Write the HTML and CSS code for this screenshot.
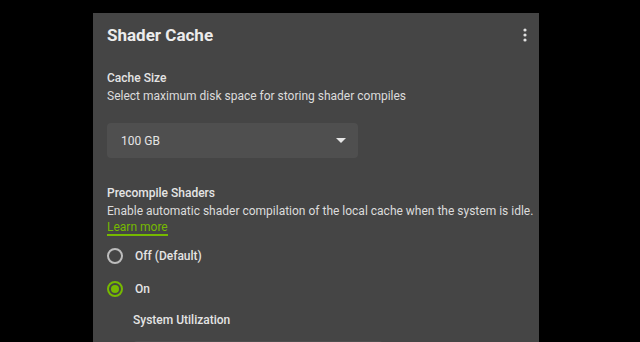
FILE: index.html
```html
<!DOCTYPE html>
<html lang="en">
<head>
    <meta charset="UTF-8">
    <title>Shader Cache</title>
    <link rel="stylesheet" href="styles.css">
</head>
<body>
    <div class="panel">
        <div class="panel-header">
            <span class="panel-title">Shader Cache</span>
            <button class="kebab" aria-label="More">
                <svg width="4" height="14" viewBox="0 0 4 14"><circle cx="2" cy="2" r="1.6" fill="#e0e0e0"/><circle cx="2" cy="7" r="1.6" fill="#e0e0e0"/><circle cx="2" cy="12" r="1.6" fill="#e0e0e0"/></svg>
            </button>
        </div>

        <div class="section">
            <div class="label">Cache Size</div>
            <div class="desc">Select maximum disk space for storing shader compiles</div>
            <div class="select">
                <span>100 GB</span>
                <svg width="10" height="5" viewBox="0 0 10 5"><path d="M0 0 L10 0 L5 5 Z" fill="#e6e6e6"/></svg>
            </div>
        </div>

        <div class="section">
            <div class="label">Precompile Shaders</div>
            <div class="desc">Enable automatic shader compilation of the local cache when the system is idle.</div>
            <a class="link" href="#">Learn more</a>
            <div class="radio-group">
                <label class="radio"><span class="dot"></span>Off (Default)</label>
                <label class="radio checked"><span class="dot"></span>On</label>
            </div>
            <div class="sub">
                <div class="label">System Utilization</div>
                <div class="select small"></div>
            </div>
        </div>
    </div>
</body>
</html>
```

FILE: styles.css
```css
body {
    margin: 0;
    background: #000;
    font-family: Roboto, "Noto Sans", sans-serif;
    color: #e4e4e4;
    overflow: hidden;
    height: 342px;
}

.panel {
    margin: 13px 0 0 93px;
    width: 446px;
    height: 329px;
    background: #454545;
    padding: 0 14px;
    box-sizing: border-box;
    overflow: hidden;
}

.panel-header {
    display: flex;
    justify-content: space-between;
    align-items: center;
    height: 44px;
}

.panel-title {
    font-size: 17px;
    font-weight: 700;
    color: #ececec;
}

.kebab {
    background: none;
    border: none;
    padding: 0;
    margin-right: -2px;
    display: flex;
}

.section {
    padding-top: 12px;
}

.label {
    font-size: 12px;
    font-weight: 500;
    line-height: 18px;
}

.desc {
    font-size: 12px;
    line-height: 18px;
    color: #dcdcdc;
    white-space: nowrap;
}

.select {
    margin-top: 18px;
    width: 251px;
    height: 35px;
    background: #4f4f4f;
    border-radius: 4px;
    box-sizing: border-box;
    padding: 0 12px 0 14px;
    display: flex;
    justify-content: space-between;
    align-items: center;
    font-size: 12px;
    margin-bottom: 14px;
}

.link {
    display: block;
    width: fit-content;
    color: #76b900;
    font-size: 12px;
    line-height: 14px;
    text-decoration: none;
    border-bottom: 2px solid #76b900;
}

.radio-group {
    margin-top: 3px;
}

.radio {
    display: flex;
    align-items: center;
    height: 33px;
    font-size: 12px;
    font-weight: 500;
}

.dot {
    width: 16px;
    height: 16px;
    border: 2px solid #bdbdbd;
    border-radius: 50%;
    box-sizing: border-box;
    margin-right: 12px;
    position: relative;
}

.radio.checked .dot {
    border-color: #76b900;
}

.radio.checked .dot::after {
    content: "";
    position: absolute;
    left: 2px;
    top: 2px;
    width: 8px;
    height: 8px;
    border-radius: 50%;
    background: #76b900;
}

.sub {
    padding-left: 26px;
    margin-top: 6px;
}

.select.small {
    margin-top: 12px;
    width: 250px;
}
```
